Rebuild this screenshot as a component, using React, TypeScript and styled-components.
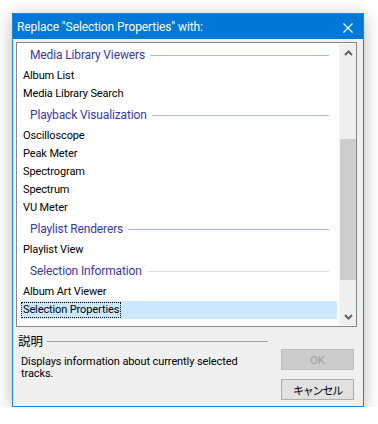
import styled, { createGlobalStyle } from "styled-components";

type Entry = { kind: "group" | "item"; label: string; faint?: boolean; selected?: boolean };

const entries: Entry[] = [
  { kind: "group", label: "Media Library Viewers" },
  { kind: "item", label: "Album List" },
  { kind: "item", label: "Media Library Search" },
  { kind: "group", label: "Playback Visualization" },
  { kind: "item", label: "Oscilloscope" },
  { kind: "item", label: "Peak Meter" },
  { kind: "item", label: "Spectrogram" },
  { kind: "item", label: "Spectrum" },
  { kind: "item", label: "VU Meter" },
  { kind: "group", label: "Playlist Renderers" },
  { kind: "item", label: "Playlist View" },
  { kind: "group", label: "Selection Information", faint: true },
  { kind: "item", label: "Album Art Viewer" },
  { kind: "item", label: "Selection Properties", selected: true },
];

export default function App(): JSX.Element {
  return (
    <>
      <GlobalStyle />
      <Window>
        <TitleBar>
          <Title>Replace "Selection Properties" with:</Title>
          <CloseButton>
            <svg width="10" height="10" viewBox="0 0 10 10">
              <path d="M0.5 0.5 L9.5 9.5 M9.5 0.5 L0.5 9.5" stroke="#fff" strokeWidth="1.1" />
            </svg>
          </CloseButton>
        </TitleBar>
        <Body>
          <ListBox>
            <Items>
              {entries.map((entry) =>
                entry.kind === "group" ? (
                  <GroupHeader key={entry.label}>
                    <span>{entry.label}</span>
                    <GroupLine $faint={entry.faint} />
                  </GroupHeader>
                ) : (
                  <Item key={entry.label} $selected={entry.selected}>
                    <ItemText $focused={entry.selected}>{entry.label}</ItemText>
                  </Item>
                )
              )}
            </Items>
            <ScrollBar>
              <ScrollArrow>
                <svg width="9" height="6" viewBox="0 0 9 6">
                  <path d="M1 5 L4.5 1.5 L8 5" stroke="#606060" strokeWidth="2" fill="none" />
                </svg>
              </ScrollArrow>
              <Track>
                <Thumb style={{ marginTop: 78, height: 141 }} />
              </Track>
              <ScrollArrow>
                <svg width="9" height="6" viewBox="0 0 9 6">
                  <path d="M1 1 L4.5 4.5 L8 1" stroke="#606060" strokeWidth="2" fill="none" />
                </svg>
              </ScrollArrow>
            </ScrollBar>
          </ListBox>
          <Footer>
            <DescriptionBox>
              <LabelRow>
                <Label>説明</Label>
                <LabelLine />
              </LabelRow>
              <Description>
                Displays information about currently selected
                <br />
                tracks.
              </Description>
            </DescriptionBox>
            <Buttons>
              <Button disabled>OK</Button>
              <Button>
                <CancelText>キャンセル</CancelText>
              </Button>
            </Buttons>
          </Footer>
        </Body>
      </Window>
    </>
  );
}

const GlobalStyle = createGlobalStyle`
  body {
    margin: 0;
    background: #ffffff;
    font-family: Roboto, "Noto Sans CJK JP", sans-serif;
  }
`;

const Window = styled.div`
  box-sizing: border-box;
  margin: 13px 0 0 12px;
  width: 352px;
  height: 394px;
  border: 1px solid #1a84d8;
  background: #f0f0f0;
  box-shadow: 0 3px 16px rgba(0, 0, 0, 0.28);
  display: flex;
  flex-direction: column;
`;

const TitleBar = styled.div`
  height: 25px;
  background: #0078d7;
  display: flex;
  align-items: center;
  padding-left: 4px;
`;

const Title = styled.div`
  flex: 1;
  color: #ffffff;
  font-size: 12px;
  letter-spacing: -0.09px;
  margin-top: 1px;
`;

const CloseButton = styled.div`
  width: 31px;
  height: 25px;
  display: flex;
  align-items: center;
  justify-content: center;
  margin-top: 2px;
`;

const Body = styled.div`
  flex: 1;
  display: flex;
  flex-direction: column;
  padding: 3px 6px 0 3px;
`;

const ListBox = styled.div`
  box-sizing: border-box;
  height: 285px;
  border: 1px solid #828790;
  background: #ffffff;
  display: flex;
`;

const Items = styled.div`
  flex: 1;
  overflow: hidden;
  border-right: 1px solid #f0f4fa;
`;

const GroupHeader = styled.div`
  height: 24px;
  display: flex;
  align-items: center;
  gap: 5px;
  padding: 0 10px 0 13px;
  color: #3a3a9e;
  font-size: 12px;
  letter-spacing: -0.14px;
`;

const GroupLine = styled.div<{ $faint?: boolean }>`
  flex: 1;
  height: 1px;
  margin-top: 1px;
  background: ${(p) => (p.$faint ? "#d5e1ec" : "#a8badf")};
`;

const Item = styled.div<{ $selected?: boolean }>`
  height: 18px;
  margin: 0 2px 0 5px;
  display: flex;
  align-items: center;
  background: ${(p) => (p.$selected ? "#cce8ff" : "transparent")};
`;

const ItemText = styled.span<{ $focused?: boolean }>`
  font-size: 11px;
  letter-spacing: -0.12px;
  color: #000000;
  line-height: 14px;
  padding: 0 1px 0 1px;
  margin-top: -1px;
  margin-left: -1px;
  border: 1px dotted ${(p) => (p.$focused ? "#000000" : "transparent")};
`;

const ScrollBar = styled.div`
  width: 16px;
  margin: 1px 0;
  background: #f0f0f0;
  display: flex;
  flex-direction: column;
`;

const ScrollArrow = styled.div`
  height: 17px;
  display: flex;
  align-items: center;
  justify-content: center;
`;

const Track = styled.div`
  flex: 1;
  display: flex;
  flex-direction: column;
`;

const Thumb = styled.div`
  background: #cdcdcd;
`;

const Footer = styled.div`
  flex: 1;
  display: flex;
  padding: 0 3px 0 2px;
`;

const DescriptionBox = styled.div`
  width: 250px;
  padding-top: 5px;
`;

const LabelRow = styled.div`
  display: flex;
  align-items: center;
  gap: 4px;
`;

const Label = styled.span`
  font-family: "Noto Sans CJK JP", sans-serif;
  font-size: 12.5px;
  line-height: 18px;
  color: #000000;
`;

const LabelLine = styled.div`
  flex: 1;
  height: 1px;
  background: #a0a0a0;
`;

const Description = styled.div`
  padding: 6px 0 0 3px;
  font-size: 11px;
  letter-spacing: -0.1px;
  line-height: 12px;
  color: #000000;
`;

const Buttons = styled.div`
  margin-left: auto;
  width: 73px;
  padding-top: 22px;
  display: flex;
  flex-direction: column;
  gap: 9px;
`;

const Button = styled.button`
  box-sizing: border-box;
  height: 21px;
  padding: 0;
  border: 1px solid ${(p) => (p.disabled ? "#bfbfbf" : "#adadad")};
  background: ${(p) => (p.disabled ? "#cccccc" : "#e1e1e1")};
  color: ${(p) => (p.disabled ? "#a0a0a0" : "#000000")};
  font-family: Roboto, "Noto Sans CJK JP", sans-serif;
  font-size: 11.5px;
`;

const CancelText = styled.span`
  font-family: "Noto Sans CJK JP", sans-serif;
  font-size: 11px;
  letter-spacing: -1.2px;
`;
